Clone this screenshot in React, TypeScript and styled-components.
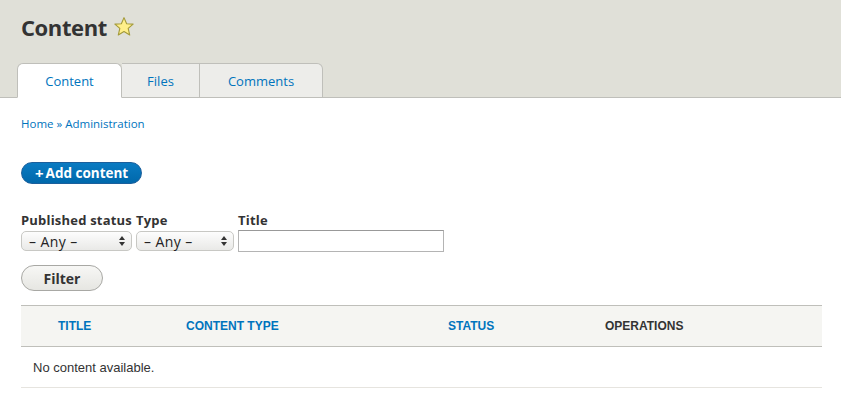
import React from "react";
import styled, { createGlobalStyle } from "styled-components";

const Global = createGlobalStyle`
  html, body { margin: 0; padding: 0; background: #fff; }
  body { font-family: "Open Sans", "DejaVu Sans", sans-serif; color: #333; }
  * { box-sizing: border-box; }
`;

const Header = styled.header`
  background: #e0e0d8;
  border-bottom: 1px solid #bfbfba;
  padding: 13px 0 0 17px;
  height: 98px;
  display: flex;
  flex-direction: column;
`;

const TitleRow = styled.h1`
  margin: 0 0 0 4px;
  display: flex;
  align-items: center;
  gap: 6px;
  font-family: "Open Sans", sans-serif;
  font-weight: 700;
  font-size: 22px;
  line-height: 28px;
  height: 28px;
  color: #333;
  letter-spacing: -0.4px;
`;

const Tabs = styled.nav`
  display: flex;
  margin-top: 22px;
  margin-bottom: -1px;
`;

const Tab = styled.a<{ $active?: boolean; $w: number }>`
  width: ${(p) => p.$w}px;
  height: 35px;
  display: flex;
  align-items: center;
  justify-content: center;
  font-size: 13px;
  color: #0074bd;
  text-decoration: none;
  background: ${(p) => (p.$active ? "#fff" : "#ededea")};
  border: 1px solid #bfbfba;
  border-bottom-color: ${(p) => (p.$active ? "#fff" : "#bfbfba")};
  border-left-width: ${(p) => (p.$active ? "1px" : "0")};
  &:first-child { border-radius: 6px 6px 0 0; }
  &:last-child { border-top-right-radius: 6px; }
  padding-top: 1px;
`;

const Main = styled.main`
  padding: 0 19px 0 21px;
`;

const Breadcrumb = styled.div`
  margin-top: 18px;
  font-size: 11.5px;
  line-height: 16px;
  color: #0074bd;
`;

const PrimaryButton = styled.a`
  display: inline-flex;
  align-items: center;
  margin-top: 30px;
  height: 22px;
  width: 121px;
  padding-left: 13px;
  border-radius: 11px;
  background: linear-gradient(#0a7bc2, #0068ab);
  border: 1px solid #1b5f9c;
  color: #fff;
  font-weight: 700;
  font-size: 13.5px;
  text-decoration: none;
  gap: 2px;
`;

const Plus = styled.span`
  font-size: 15px;
  line-height: 1;
`;

const Filters = styled.div`
  display: flex;
  margin-top: 28px;
`;

const FormItem = styled.div<{ $w?: number }>`
  width: ${(p) => (p.$w ? `${p.$w}px` : "auto")};
  display: flex;
  flex-direction: column;
`;

const Label = styled.label`
  font-weight: 700;
  font-size: 13px;
  line-height: 17px;
  height: 18px;
  color: #333;
  white-space: nowrap;
  letter-spacing: 0.2px;
`;

const SelectBox = styled.div<{ $w: number }>`
  position: relative;
  width: ${(p) => p.$w}px;
  height: 20px;
  margin-top: 1px;
  border: 1px solid #c8c8c4;
  border-radius: 5px;
  background: linear-gradient(#fdfdfd, #e9e9e7);
  display: flex;
  align-items: center;
  padding-left: 7px;
  font-size: 14px;
  letter-spacing: 0.4px;
  color: #222;
`;

const Arrows = styled.svg`
  position: absolute;
  right: 6px;
  top: 4px;
`;

const TextInput = styled.input`
  width: 206px;
  height: 22px;
  border: 1px solid #b4b4b4;
  border-top-color: #999;
  background: #fff;
  padding: 0 4px;
`;

const FilterButton = styled.button`
  margin-top: 13px;
  width: 82px;
  height: 26px;
  border-radius: 13px;
  border: 1px solid #a8a8a4;
  background: linear-gradient(#f7f7f5, #e6e6e2);
  font-family: "Open Sans", sans-serif;
  font-weight: 700;
  font-size: 14px;
  color: #333;
  padding: 0;
  display: block;
`;

const Table = styled.table`
  margin-top: 14px;
  width: 801px;
  border-collapse: collapse;
  font-family: "Liberation Sans", Arial, sans-serif;
`;

const Th = styled.th<{ $w?: number; $link?: boolean; $spacer?: boolean }>`
  width: ${(p) => (p.$w ? `${p.$w}px` : "auto")};
  background: #f5f5f2;
  border-top: 1px solid #bfbfba;
  border-bottom: 1px solid #bfbfba;
  height: 41px;
  padding: ${(p) => (p.$spacer ? "0" : "0 12px")};
  text-align: left;
  font-weight: 700;
  font-size: 12px;
  text-transform: uppercase;
  color: ${(p) => (p.$link ? "#0074bd" : "#333")};
`;

const Td = styled.td`
  height: 41px;
  padding: 0 12px;
  border-bottom: 1px solid #e6e4df;
  font-size: 13px;
  color: #333;
`;

const Star = () => (
  <svg width="22" height="22" viewBox="0 0 20 20">
    <path
      d="M10 1.5 L12.4 7 L18.3 7.4 L13.8 11.3 L15.2 17.3 L10 14.1 L4.8 17.3 L6.2 11.3 L1.7 7.4 L7.6 7 Z"
      fill="#ffef8a"
      stroke="#a39a3a"
      strokeWidth="1"
      strokeLinejoin="round"
    />
  </svg>
);

const Select = ({ w }: { w: number }) => (
  <SelectBox $w={w}>
    – Any –
    <Arrows width="6" height="10" viewBox="0 0 6 10">
      <path d="M3 0 L6 4 L0 4 Z" fill="#333" />
      <path d="M3 10 L6 6 L0 6 Z" fill="#333" />
    </Arrows>
  </SelectBox>
);

export default function App() {
  return (
    <>
      <Global />
      <Header>
        <TitleRow>
          Content <Star />
        </TitleRow>
        <Tabs>
          <Tab $active $w={105}>Content</Tab>
          <Tab $w={78}>Files</Tab>
          <Tab $w={123}>Comments</Tab>
        </Tabs>
      </Header>
      <Main>
        <Breadcrumb>Home » Administration</Breadcrumb>
        <PrimaryButton>
          <Plus>+</Plus>Add content
        </PrimaryButton>
        <Filters>
          <FormItem $w={115}>
            <Label>Published status</Label>
            <Select w={111} />
          </FormItem>
          <FormItem $w={102}>
            <Label>Type</Label>
            <Select w={98} />
          </FormItem>
          <FormItem>
            <Label>Title</Label>
            <TextInput />
          </FormItem>
        </Filters>
        <FilterButton>Filter</FilterButton>
        <Table>
          <thead>
            <tr>
              <Th $w={25} $spacer />
              <Th $w={128} $link>Title</Th>
              <Th $w={262} $link>Content type</Th>
              <Th $w={157} $link>Status</Th>
              <Th>Operations</Th>
            </tr>
          </thead>
          <tbody>
            <tr>
              <Td colSpan={5}>No content available.</Td>
            </tr>
          </tbody>
        </Table>
      </Main>
    </>
  );
}
